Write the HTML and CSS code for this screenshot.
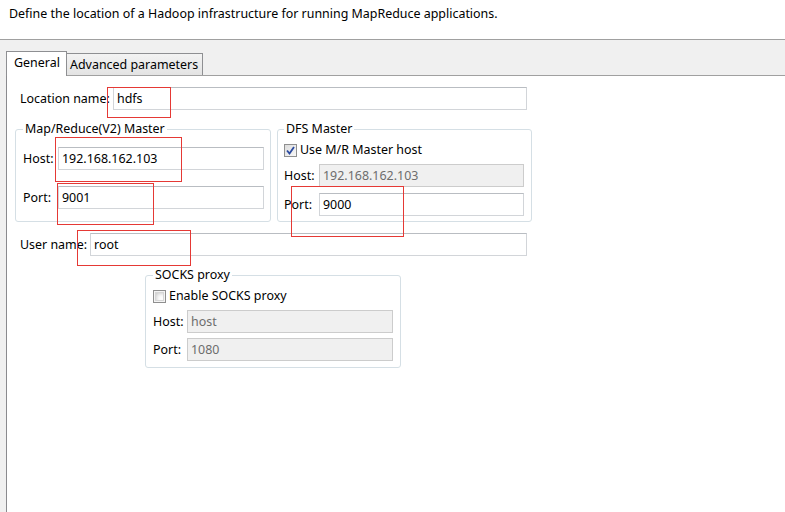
FILE: index.html
```html
<!DOCTYPE html>
<html>
<head>
<meta charset="utf-8">
<link rel="stylesheet" href="styles.css">
</head>
<body>
<div class="header">Define the location of a Hadoop infrastructure for running MapReduce applications.</div>
<div class="tabarea">
  <div class="tabs">
    <div class="tab active">General</div>
    <div class="tab inactive">Advanced parameters</div>
  </div>
  <div class="panel">
    <div class="row loc-row">
      <span class="lbl lbl-loc">Location name:</span>
      <div class="input in-loc">hdfs</div>
    </div>
    <div class="groups">
      <fieldset class="group g-mr">
        <legend>Map/Reduce(V2) Master</legend>
        <div class="row mr-host"><span class="lbl lbl-mr">Host:</span><div class="input in-mr">192.168.162.103</div></div>
        <div class="row mr-port"><span class="lbl lbl-mr">Port:</span><div class="input in-mr">9001</div></div>
      </fieldset>
      <fieldset class="group g-dfs">
        <legend>DFS Master</legend>
        <div class="check-row">
          <span class="cb checked"><svg width="9" height="9" viewBox="0 0 9 9"><path d="M1 4.5 L3.5 7.5 L8 1" fill="none" stroke="#2a4aa0" stroke-width="1.8"/></svg></span>
          <span>Use M/R Master host</span>
        </div>
        <div class="row dfs-host"><span class="lbl lbl-dfs">Host:</span><div class="input disabled in-dfs">192.168.162.103</div></div>
        <div class="row dfs-port"><span class="lbl lbl-dfs">Port:</span><div class="input in-dfs">9000</div></div>
      </fieldset>
    </div>
    <div class="row user-row">
      <span class="lbl lbl-user">User name:</span>
      <div class="input in-user">root</div>
    </div>
    <fieldset class="group g-socks">
      <legend>SOCKS proxy</legend>
      <div class="check-row">
        <span class="cb unchecked"></span>
        <span>Enable SOCKS proxy</span>
      </div>
      <div class="row socks-host"><span class="lbl lbl-socks">Host:</span><div class="input disabled in-socks">host</div></div>
      <div class="row socks-port"><span class="lbl lbl-socks">Port:</span><div class="input disabled in-socks">1080</div></div>
    </fieldset>
  </div>
</div>
<div class="mark m1"></div>
<div class="mark m2"></div>
<div class="mark m3"></div>
<div class="mark m4"></div>
<div class="mark m5"></div>
</body>
</html>
```
FILE: styles.css
```css
* { box-sizing: border-box; }
html, body { margin: 0; padding: 0; }
body {
  background: #f0f0f0;
  font-family: "Noto Sans", "Open Sans", sans-serif;
  font-size: 12.45px;
  line-height: 16px;
  color: #000;
  width: 785px;
  height: 512px;
  overflow: hidden;
  position: relative;
}
.header {
  height: 40px;
  background: #fff;
  border-bottom: 1px solid #a0a0a0;
  padding: 6px 0 0 9px;
}
.tabs {
  display: flex;
  align-items: flex-end;
  padding: 11px 0 0 6px;
}
.tab {
  border: 1px solid #8e8f92;
  border-bottom: none;
  padding-left: 7px;
}
.tab.active {
  width: 61px;
  height: 25px;
  background: #fff;
  margin-bottom: -1px;
  position: relative;
  z-index: 1;
  padding-top: 3px;
}
.tab.inactive {
  width: 136px;
  height: 22px;
  background: linear-gradient(#f3f3f3, #e3e3e3);
  padding-left: 3px;
  padding-top: 3px;
  border-left: none;
}
.panel {
  margin-left: 6px;
  height: 437px;
  background: #fff;
  border-left: 1px solid #8a8a8e;
  border-top: 1px solid #a0a0a0;
  padding-left: 8px;
  padding-top: 11px;
}
.row {
  display: flex;
  align-items: center;
  height: 23px;
}
.loc-row, .user-row { padding-left: 5px; }
.lbl { flex: none; }
.lbl-loc { width: 93px; }
.lbl-user { width: 70px; }
.lbl-mr { width: 35px; }
.lbl-dfs { width: 35px; }
.lbl-socks { width: 34px; }
.input {
  height: 23px;
  border: 1px solid #d2d5d9;
  border-top-color: #b9bdc2;
  background: #fff;
  padding: 3px 0 0 3px;
  white-space: nowrap;
}
.input.disabled {
  background: #f0f0f0;
  color: #6d6d6d;
  border-color: #cccccc;
}
.in-loc { width: 414px; }
.in-user { width: 437px; }
.in-mr { width: 206px; }
.in-dfs { width: 205px; }
.in-socks { width: 206px; }
.groups {
  display: flex;
  gap: 6px;
  margin-top: 11px;
}
.group {
  margin: 0;
  border: 1px solid #d5dfe5;
  border-radius: 3px;
  min-width: 0;
}
.group legend {
  padding: 0 2px;
  line-height: 16px;
}
.g-mr {
  width: 256px;
  padding: 10px 0 12px 7px;
}
.mr-port { margin-top: 16px; }
.g-dfs {
  width: 255px;
  padding: 5px 0 5px 6px;
}
.check-row {
  display: flex;
  align-items: center;
  height: 16px;
  gap: 3px;
}
.cb {
  width: 13px;
  height: 13px;
  border: 1px solid #8f8f8f;
  display: flex;
  align-items: center;
  justify-content: center;
  flex: none;
}
.cb.checked { background: linear-gradient(135deg, #dcdcdc, #f8f8f8); }
.cb.unchecked {
  background: #fff;
  box-shadow: inset 0 0 0 1px #f4f4f4, inset 0 0 0 2px #d6d6d6, inset 2px 2px 5px #bdbdbd;
}
.dfs-host { margin-top: 6px; }
.dfs-port { margin-top: 6px; }
.user-row { margin-top: 11px; }
.g-socks {
  width: 256px;
  margin-left: 130px;
  margin-top: 11px;
  padding: 5px 0 6px 7px;
}
.socks-host { margin-top: 6px; }
.socks-port { margin-top: 5px; }
.mark {
  position: absolute;
  border: 1px solid #e53935;
  z-index: 5;
}
.m1 { left: 107px; top: 87px; width: 64px; height: 31px; }
.m2 { left: 55px; top: 137px; width: 127px; height: 45px; }
.m3 { left: 57px; top: 183px; width: 97px; height: 42px; }
.m4 { left: 291px; top: 186px; width: 113px; height: 51px; }
.m5 { left: 77px; top: 230px; width: 114px; height: 36px; }
```
